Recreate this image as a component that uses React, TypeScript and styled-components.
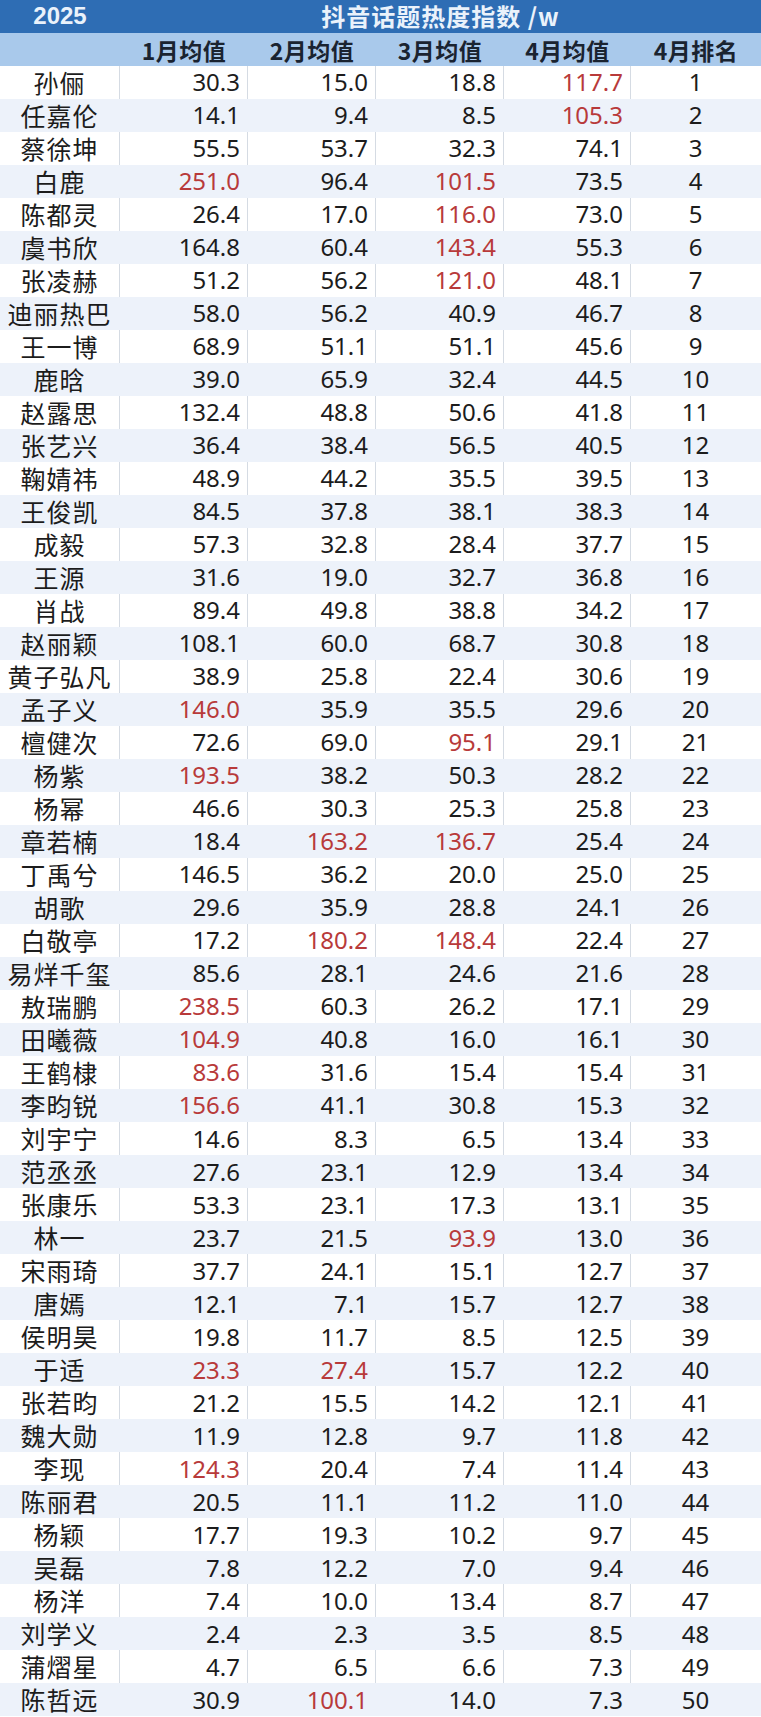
import React from "react";
import styled, { createGlobalStyle } from "styled-components";

const GlobalStyle = createGlobalStyle`
  html, body {
    margin: 0;
    padding: 0;
    background: #ffffff;
  }
`;

const COLS = "120px 128px 128px 128px 127px 130px";

const Sheet = styled.div`
  width: 761px;
  display: flex;
  flex-direction: column;
  font-family: "Noto Sans", "Noto Sans CJK SC", sans-serif;
  color: #1c1c1c;
`;

const TitleBar = styled.div`
  height: 33px;
  display: grid;
  grid-template-columns: 120px 1fr;
  align-items: center;
  background: #2e6db4;
  color: #eaf2fb;
  font-weight: 700;
  line-height: 1.2;
`;

const Year = styled.div`
  text-align: center;
  font-family: "Liberation Sans", "Noto Sans CJK SC", sans-serif;
  font-size: 24px;
`;

const Title = styled.div`
  text-align: center;
  font-family: "Noto Sans CJK SC", sans-serif;
  font-size: 24px;
  letter-spacing: 1px;
`;

const HeaderRow = styled.div`
  height: 32.5px;
  display: grid;
  grid-template-columns: ${COLS};
  align-items: center;
  background: #a9c9eb;
  line-height: 1;
`;

const HeaderCell = styled.div`
  text-align: center;
  padding-top: 3px;
  font-family: "Noto Sans CJK SC", sans-serif;
  font-weight: 700;
  font-size: 23px;
  color: #1a2330;
  letter-spacing: 0.5px;
`;

const Row = styled.div<{ $shade: boolean }>`
  height: 33.03px;
  display: grid;
  grid-template-columns: ${COLS};
  background: ${({ $shade }) => ($shade ? "#edf2fa" : "#ffffff")};
`;

const Cell = styled.div<{ $shade: boolean; $align: "left" | "center" | "right"; $red?: boolean; $last?: boolean }>`
  display: flex;
  align-items: center;
  justify-content: ${({ $align }) =>
    $align === "right" ? "flex-end" : $align === "center" ? "center" : "flex-start"};
  padding-right: ${({ $align }) => ($align === "right" ? "7px" : "0")};
  border-right: 1px solid
    ${({ $shade, $last }) => ($shade || $last ? "transparent" : "#d5dbe3")};
  font-size: 24px;
  font-weight: 400;
  color: ${({ $red }) => ($red ? "#b83a3a" : "#1c1c1c")};
  box-sizing: border-box;
  line-height: 1;
`;

const NameCell = styled(Cell)`
  font-family: "Noto Sans CJK SC", sans-serif;
  font-size: 25px;
  letter-spacing: 1px;
`;

// [name, m1, m2, m3, m4]; a trailing "*" marks a red value
const data: string[][] = [
  ["孙俪", "30.3", "15.0", "18.8", "117.7*"],
  ["任嘉伦", "14.1", "9.4", "8.5", "105.3*"],
  ["蔡徐坤", "55.5", "53.7", "32.3", "74.1"],
  ["白鹿", "251.0*", "96.4", "101.5*", "73.5"],
  ["陈都灵", "26.4", "17.0", "116.0*", "73.0"],
  ["虞书欣", "164.8", "60.4", "143.4*", "55.3"],
  ["张凌赫", "51.2", "56.2", "121.0*", "48.1"],
  ["迪丽热巴", "58.0", "56.2", "40.9", "46.7"],
  ["王一博", "68.9", "51.1", "51.1", "45.6"],
  ["鹿晗", "39.0", "65.9", "32.4", "44.5"],
  ["赵露思", "132.4", "48.8", "50.6", "41.8"],
  ["张艺兴", "36.4", "38.4", "56.5", "40.5"],
  ["鞠婧祎", "48.9", "44.2", "35.5", "39.5"],
  ["王俊凯", "84.5", "37.8", "38.1", "38.3"],
  ["成毅", "57.3", "32.8", "28.4", "37.7"],
  ["王源", "31.6", "19.0", "32.7", "36.8"],
  ["肖战", "89.4", "49.8", "38.8", "34.2"],
  ["赵丽颖", "108.1", "60.0", "68.7", "30.8"],
  ["黄子弘凡", "38.9", "25.8", "22.4", "30.6"],
  ["孟子义", "146.0*", "35.9", "35.5", "29.6"],
  ["檀健次", "72.6", "69.0", "95.1*", "29.1"],
  ["杨紫", "193.5*", "38.2", "50.3", "28.2"],
  ["杨幂", "46.6", "30.3", "25.3", "25.8"],
  ["章若楠", "18.4", "163.2*", "136.7*", "25.4"],
  ["丁禹兮", "146.5", "36.2", "20.0", "25.0"],
  ["胡歌", "29.6", "35.9", "28.8", "24.1"],
  ["白敬亭", "17.2", "180.2*", "148.4*", "22.4"],
  ["易烊千玺", "85.6", "28.1", "24.6", "21.6"],
  ["敖瑞鹏", "238.5*", "60.3", "26.2", "17.1"],
  ["田曦薇", "104.9*", "40.8", "16.0", "16.1"],
  ["王鹤棣", "83.6*", "31.6", "15.4", "15.4"],
  ["李昀锐", "156.6*", "41.1", "30.8", "15.3"],
  ["刘宇宁", "14.6", "8.3", "6.5", "13.4"],
  ["范丞丞", "27.6", "23.1", "12.9", "13.4"],
  ["张康乐", "53.3", "23.1", "17.3", "13.1"],
  ["林一", "23.7", "21.5", "93.9*", "13.0"],
  ["宋雨琦", "37.7", "24.1", "15.1", "12.7"],
  ["唐嫣", "12.1", "7.1", "15.7", "12.7"],
  ["侯明昊", "19.8", "11.7", "8.5", "12.5"],
  ["于适", "23.3*", "27.4*", "15.7", "12.2"],
  ["张若昀", "21.2", "15.5", "14.2", "12.1"],
  ["魏大勋", "11.9", "12.8", "9.7", "11.8"],
  ["李现", "124.3*", "20.4", "7.4", "11.4"],
  ["陈丽君", "20.5", "11.1", "11.2", "11.0"],
  ["杨颖", "17.7", "19.3", "10.2", "9.7"],
  ["吴磊", "7.8", "12.2", "7.0", "9.4"],
  ["杨洋", "7.4", "10.0", "13.4", "8.7"],
  ["刘学义", "2.4", "2.3", "3.5", "8.5"],
  ["蒲熠星", "4.7", "6.5", "6.6", "7.3"],
  ["陈哲远", "30.9", "100.1*", "14.0", "7.3"],
];

const headers = ["", "1月均值", "2月均值", "3月均值", "4月均值", "4月排名"];

const App = () => {
  return (
    <>
      <GlobalStyle />
      <Sheet>
        <TitleBar>
          <Year>2025</Year>
          <Title>抖音话题热度指数 /w</Title>
        </TitleBar>
        <HeaderRow>
          {headers.map((h, i) => (
            <HeaderCell key={i}>{h}</HeaderCell>
          ))}
        </HeaderRow>
        {data.map((row, r) => {
          const shade = r % 2 === 1;
          return (
            <Row key={row[0]} $shade={shade}>
              <NameCell $shade={shade} $align="center">
                {row[0]}
              </NameCell>
              {row.slice(1).map((v, c) => {
                const red = v.endsWith("*");
                return (
                  <Cell key={c} $shade={shade} $align="right" $red={red}>
                    {red ? v.slice(0, -1) : v}
                  </Cell>
                );
              })}
              <Cell $shade={shade} $align="center" $last>
                {r + 1}
              </Cell>
            </Row>
          );
        })}
      </Sheet>
    </>
  );
};

export default App;
